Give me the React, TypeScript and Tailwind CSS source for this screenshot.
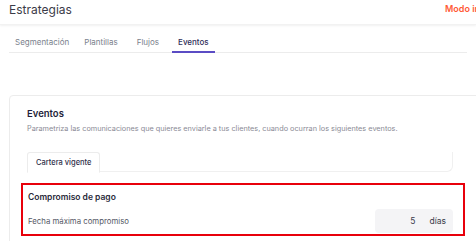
import React from "react";

export default function App() {
  return (
    <div className="w-[476px] h-[241px] overflow-hidden bg-white font-['Inter',sans-serif] relative">
      <div className="h-[25px] flex items-start justify-between pl-[9px] pt-[1px] shadow-[0_1px_2px_rgba(0,0,0,0.06)] border-b border-[#f2f2f2]">
        <div className="text-[12px] leading-[18px] text-[#3b3b48]">Estrategias</div>
        <div className="text-[9px] font-semibold text-[#ff5a36] pt-[1px] whitespace-nowrap w-[31px] overflow-hidden">Modo inactivo</div>
      </div>
      <div className="mx-[9px] mt-[10px] flex border-b border-[#ececec] text-[8px]">
        <div className="px-[6px] pt-[1px] pb-[4px] text-[#7a7f8c]">Segmentación</div>
        <div className="ml-[3px] px-[6px] pt-[1px] pb-[4px] text-[#7a7f8c]">Plantillas</div>
        <div className="ml-[7px] px-[6px] pt-[1px] pb-[4px] text-[#7a7f8c]">Flujos</div>
        <div className="ml-[7px] px-[6px] pt-[1px] pb-[3px] text-[#2f2f5a] font-medium border-b-2 border-[#5b4cc4] -mb-px">Eventos</div>
      </div>
      <div className="ml-[9px] mt-[42px] w-[480px] border border-[#ececec] rounded-[4px] pl-[17px] pt-[11px] pb-[20px]">
        <div className="text-[9.5px] font-semibold text-[#1f1f3a]">Eventos</div>
        <div className="mt-[3px] text-[7.3px] text-[#8a8a95]">Parametriza las comunicaciones que quieres enviarle a tus clientes, cuando ocurran los siguientes eventos.</div>
        <div className="mt-[17px] w-[426px] h-[20px] flex border-b border-[#f0f0f0] rounded-br-[6px] border-r">
          <div className="px-[8px] h-[21px] flex items-center text-[7.5px] font-medium text-[#2f2f4a] border border-[#ececec] border-b-white bg-white rounded-t-[3px]">Cartera vigente</div>
        </div>
        <div className="-ml-[6px] mt-[11px] w-[444px] h-[53px] border-2 border-[#e8000b] pl-[5px] pr-[10px] pt-[6px]">
          <div className="text-[8.5px] font-semibold text-[#2a2a3a]">Compromiso de pago</div>
          <div className="flex items-center justify-between mt-[6px]">
            <div className="text-[7.8px] text-[#555866]">Fecha máxima compromiso</div>
            <div className="w-[78px] h-[24px] bg-[#f4f4f6] rounded-[4px] flex items-center justify-end pr-[7px] text-[8.5px] text-[#3a3a4a] -mt-[1px]">
              <span>5</span>
              <span className="ml-[14px]">días</span>
            </div>
          </div>
        </div>
      </div>
    </div>
  );
}
